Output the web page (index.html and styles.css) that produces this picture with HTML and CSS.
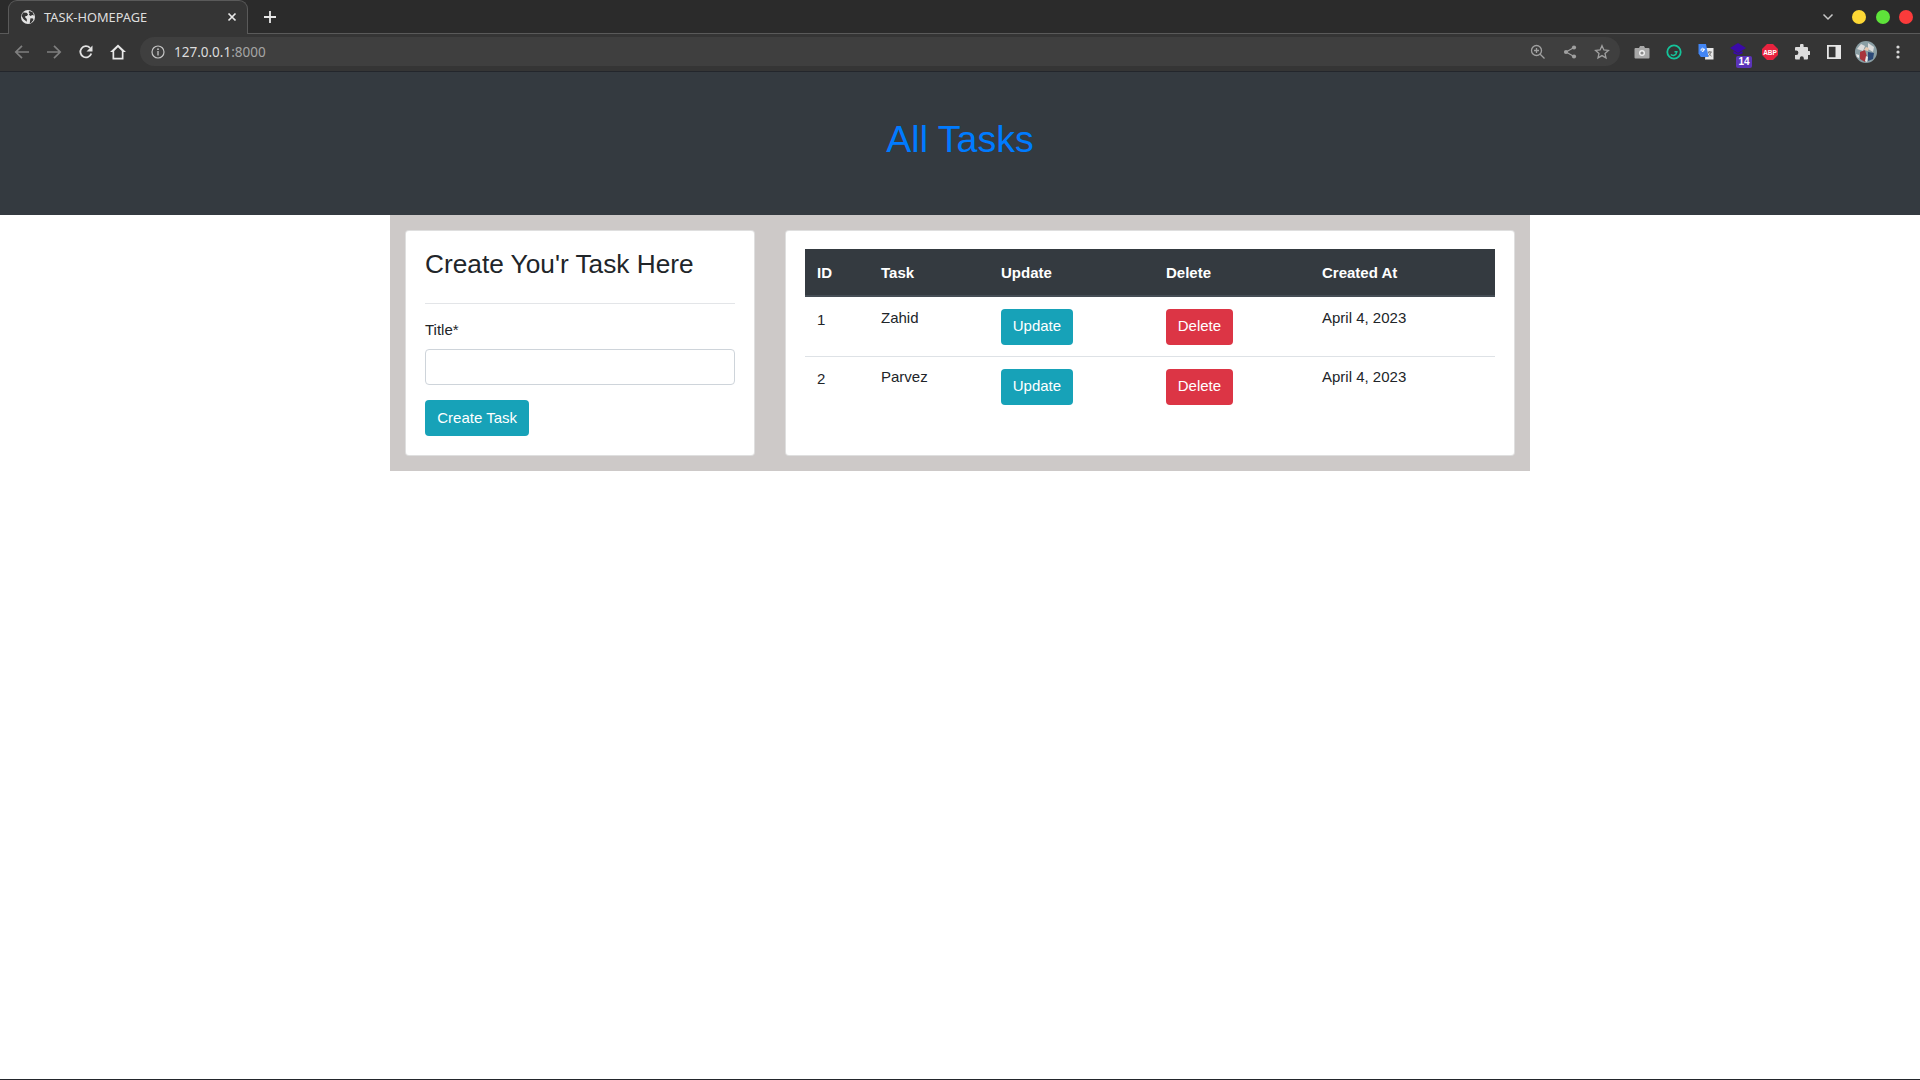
FILE: index.html
```html
<!DOCTYPE html>
<html lang="en">
<head>
<meta charset="utf-8">
<title>TASK-HOMEPAGE</title>
<link rel="stylesheet" href="styles.css">
</head>
<body>
<div class="browser">
  <div class="tabstrip">
    <div class="tab">
      <svg class="globe" width="16" height="16" viewBox="0 0 16 16"><circle cx="8" cy="8" r="7" fill="#e3e3e3"/><path d="M3 3.500l3.600.3 1.400 1.500-1 1.600-1.600.2-.2 1.400 1.600 1.600v2.600L3.400 10 1.600 7zM9.500 2l3.200 1.300L14 6.500l-1.800-.5-1.600.9-1.700-1.100.8-1.400-1.200-1.400zM10.500 9.200l2.600.4.300 1.500-2.400 2.800-1.200.2.300-2.800z" fill="#353535"/></svg>
      <span class="tab-title">TASK-HOMEPAGE</span>
      <svg class="tab-close" width="10" height="10" viewBox="0 0 10 10"><path d="M1.500 1.500l7 7M8.500 1.500l-7 7" stroke="#e8e8e8" stroke-width="1.700"/></svg>
    </div>
    <svg class="plus" width="14" height="14" viewBox="0 0 14 14"><path d="M7 1v12M1 7h12" stroke="#e8e8e8" stroke-width="1.800"/></svg>
    <div class="strip-right">
      <svg class="chevron" width="12" height="8" viewBox="0 0 12 8"><path d="M1.500 1.500L6 6l4.500-4.500" fill="none" stroke="#c8c8c8" stroke-width="1.500"/></svg>
      <span class="dot dot-yellow"></span>
      <span class="dot dot-green"></span>
      <span class="dot dot-red"></span>
    </div>
  </div>
  <div class="toolbar">
    <span class="tb"><svg width="16" height="16" viewBox="0 0 16 16"><path d="M15 8H2M8 1.800L1.800 8 8 14.200" fill="none" stroke="#7f7f7f" stroke-width="1.700"/></svg></span>
    <span class="tb"><svg width="16" height="16" viewBox="0 0 16 16"><path d="M1 8h13M8 1.800L14.200 8 8 14.200" fill="none" stroke="#7f7f7f" stroke-width="1.700"/></svg></span>
    <span class="tb"><svg width="16" height="16" viewBox="0 0 16 16"><path d="M13.300 9.500A5.600 5.600 0 1 1 12 3.900" fill="none" stroke="#e2e2e2" stroke-width="1.800"/><path d="M14.500 1.500v6h-6z" fill="#e2e2e2"/></svg></span>
    <span class="tb"><svg width="18" height="18" viewBox="0 0 18 18"><path d="M9 1.500L1 9h2.500v7.500h11V9H17zM5.200 14.800V8L9 4.300 12.800 8v6.800z" fill="#e8e8e8" fill-rule="evenodd"/></svg></span>
    <div class="omnibox">
      <svg class="info" width="14" height="14" viewBox="0 0 14 14"><circle cx="7" cy="7" r="6" fill="none" stroke="#c4c4c4" stroke-width="1.200"/><path d="M7 6v4.500" stroke="#c4c4c4" stroke-width="1.300"/><circle cx="7" cy="4.200" r=".9" fill="#c4c4c4"/></svg>
      <span class="url"><span class="url-host">127.0.0.1</span><span class="url-port">:8000</span></span>
      <div class="omni-actions">
        <span class="tb"><svg width="16" height="16" viewBox="0 0 16 16"><circle cx="6.500" cy="6.500" r="5" fill="none" stroke="#a0a0a0" stroke-width="1.300"/><path d="M10.200 10.200L14.500 14.500M6.500 4v5M4 6.500h5" stroke="#a0a0a0" stroke-width="1.300"/></svg></span>
        <span class="tb"><svg width="14" height="14" viewBox="0 0 14 14"><path d="M11 2.500L3 7l8 4.500" fill="none" stroke="#a0a0a0" stroke-width="1.200"/><circle cx="11" cy="2.500" r="2.100" fill="#a0a0a0"/><circle cx="3" cy="7" r="2.100" fill="#a0a0a0"/><circle cx="11" cy="11.500" r="2.100" fill="#a0a0a0"/></svg></span>
        <span class="tb"><svg width="16" height="16" viewBox="0 0 16 16"><path d="M8 1.700l1.900 4.200 4.500.5-3.400 3 1 4.500L8 11.600l-4 2.300 1-4.500-3.400-3 4.500-.5z" fill="none" stroke="#a0a0a0" stroke-width="1.300"/></svg></span>
      </div>
    </div>
    <span class="tb ext-first"><svg width="16" height="14" viewBox="0 0 16 14"><path d="M1.500 3H5l1-2h4l1 2h3.500a1 1 0 0 1 1 1v8.500a1 1 0 0 1-1 1h-13a1 1 0 0 1-1-1V4a1 1 0 0 1 1-1z" fill="#a8a8a8"/><circle cx="8" cy="8" r="3" fill="#f0f0f0"/><circle cx="8" cy="8" r="1.600" fill="#8a8a8a"/></svg></span>
    <span class="tb"><svg width="16" height="16" viewBox="0 0 16 16"><circle cx="8" cy="8" r="6.700" fill="none" stroke="#15c39a" stroke-width="1.800"/><path d="M4.800 10.500c1.800 1.600 5.300 1.300 6-2.700H8.500" fill="none" stroke="#15c39a" stroke-width="1.500"/></svg></span>
    <span class="tb"><svg width="16" height="16" viewBox="0 0 16 16"><path d="M8 4h7.500v11.500H7z" fill="#e8e8e8"/><path d="M9.800 8h4M11.800 7v1M10.500 8c.5 2 1.700 3.500 3 4.200M13 8c-.4 2-1.500 3.500-3 4.200" fill="none" stroke="#666" stroke-width=".8"/><path d="M.500 0H8l2.500 13H2.800L.500 9.500z" fill="#4285f4"/><path d="M7 5.300H4.900v1H6a1.500 1.500 0 1 1-.4-1.500" fill="none" stroke="#fff" stroke-width="1"/></svg></span>
    <span class="tb ext-cap">
      <svg width="16" height="12" viewBox="0 0 16 12"><path d="M8 0l8 5-8 5-8-5z" fill="#3b0aa8"/><path d="M3.500 8v2.500L8 12l4.500-1.500V8L8 10.500z" fill="#3b0aa8"/></svg>
      <span class="badge">14</span>
    </span>
    <span class="tb"><svg width="16" height="16" viewBox="0 0 16 16"><path d="M5 0h6l5 5v6l-5 5H5l-5-5V5z" fill="#e8233f"/><text class="abp" x="8" y="10.500" text-anchor="middle">ABP</text></svg></span>
    <span class="tb"><svg width="16" height="16" viewBox="0 0 16 16"><path d="M6 1.500a1.800 1.800 0 0 1 3.600 0V3H13a1 1 0 0 1 1 1v3h1a2 2 0 0 1 0 4h-1v3.500a1 1 0 0 1-1 1H9.800v-1.200a2 2 0 0 0-4 0v1.200H2a1 1 0 0 1-1-1V11h1.200a2.200 2.200 0 0 0 0-4.400H1V4a1 1 0 0 1 1-1h4z" fill="#dcdcdc"/></svg></span>
    <span class="tb"><svg width="14" height="14" viewBox="0 0 14 14"><path d="M0 0h14v14H0zM1.800 1.800v10.400h6.700V1.800z" fill="#e6e6e6" fill-rule="evenodd"/></svg></span>
    <span class="tb"><svg width="22" height="22" viewBox="0 0 22 22"><circle cx="11" cy="11" r="11" fill="#8a9ea4"/><path d="M2 8l4-5 4 2-2 5zM13 2l6 4-1 5-5-3z" fill="#dcdcdc"/><path d="M5 11l5-2 2 7-2 5-5-3z" fill="#a8343c"/><path d="M13 11l6 1-1 6-5 2z" fill="#2c4a78"/><path d="M9 9l2-3 3 1-1 3z" fill="#e8c8b0"/><path d="M1 13l3 1v3l-2-1zM11 15l2 1-1 5-2-1z" fill="#e8e8e8"/></svg></span>
    <span class="tb"><svg width="4" height="14" viewBox="0 0 4 14"><circle cx="2" cy="2" r="1.600" fill="#d8d8d8"/><circle cx="2" cy="7" r="1.600" fill="#d8d8d8"/><circle cx="2" cy="12" r="1.600" fill="#d8d8d8"/></svg></span>
  </div>
</div>
<main class="page">
  <header class="hero"><h1 class="hero-title">All Tasks</h1></header>
  <section class="board">
    <div class="card card-form">
      <h3 class="form-title">Create You'r Task Here</h3>
      <hr class="rule">
      <label class="field-label" for="title">Title*</label>
      <input class="field-input" id="title" type="text">
      <button class="btn btn-info" type="button">Create Task</button>
    </div>
    <div class="card card-table">
      <table class="tasks">
        <thead>
          <tr>
            <th class="c-id">ID</th>
            <th class="c-task">Task</th>
            <th class="c-update">Update</th>
            <th class="c-delete">Delete</th>
            <th class="c-date">Created At</th>
          </tr>
        </thead>
        <tbody>
          <tr>
            <td class="id-cell">1</td>
            <td>Zahid</td>
            <td class="btn-cell"><button class="btn btn-info" type="button">Update</button></td>
            <td class="btn-cell"><button class="btn btn-danger" type="button">Delete</button></td>
            <td>April 4, 2023</td>
          </tr>
          <tr>
            <td class="id-cell">2</td>
            <td>Parvez</td>
            <td class="btn-cell"><button class="btn btn-info" type="button">Update</button></td>
            <td class="btn-cell"><button class="btn btn-danger" type="button">Delete</button></td>
            <td>April 4, 2023</td>
          </tr>
        </tbody>
      </table>
    </div>
  </section>
</main>
</body>
</html>
```

FILE: styles.css
```css
* { box-sizing: border-box; }
html, body { margin: 0; height: 100%; }
body {
  height: 1080px;
  overflow: hidden;
  display: flex;
  flex-direction: column;
  font-family: "Liberation Sans", Arial, sans-serif;
  color: #212529;
  background: #fff;
}

/* browser chrome */
.browser { flex: none; }
.tabstrip {
  height: 34px;
  background: #2b2b2b;
  display: flex;
  align-items: flex-end;
  padding-left: 8px;
  position: relative;
  border-bottom: 1px solid #5a5a5a;
}
.tab {
  width: 240px;
  height: 34px;
  margin-bottom: -1px;
  background: #353535;
  border: 1px solid #5a5a5a;
  border-bottom: none;
  border-radius: 9px 9px 0 0;
  display: flex;
  align-items: center;
  padding: 0 10px 2px 11px;
}
.globe { flex: none; }
.tab-title {
  margin-left: 8px;
  flex: 1;
  font: 12.800px "Noto Sans", sans-serif;
  color: #dedede;
  white-space: nowrap;
}
.plus { align-self: center; margin-left: 15px; }
.strip-right {
  margin-left: auto;
  align-self: center;
  display: flex;
  align-items: center;
  padding-right: 7px;
}
.chevron { margin-right: 18px; }
.dot { width: 14px; height: 14px; border-radius: 50%; margin-left: 9.500px; }
.dot:first-of-type { margin-left: 0; }
.dot-yellow { background: #fdd835; }
.dot-green { background: #5ee33a; }
.dot-red { background: #fb3b3b; }

.toolbar {
  height: 38px;
  background: #353535;
  border-bottom: 1px solid #23262c;
  display: flex;
  align-items: center;
  padding: 0 6px 2px;
}
.tb {
  flex: none;
  width: 32px;
  height: 32px;
  display: flex;
  align-items: center;
  justify-content: center;
  position: relative;
}
.omnibox {
  flex: 1;
  height: 29px;
  margin: 0 0 0 6px;
  border-radius: 15px;
  background: #3f3f3f;
  display: flex;
  align-items: center;
  padding-left: 11px;
  padding-right: 2px;
}
.info { flex: none; }
.url { margin-left: 9px; font: 13.500px "Noto Sans", sans-serif; white-space: nowrap; }
.url-host { color: #dcdcdc; }
.url-port { color: #a5a5a5; }
.omni-actions { margin-left: auto; display: flex; }
.ext-first { margin-left: 6px; }
.ext-cap svg { margin-top: -5px; }
.badge {
  position: absolute;
  left: 14px;
  bottom: 0;
  min-width: 16px;
  height: 12px;
  border-radius: 2px;
  background: #5b34b8;
  color: #fff;
  font: bold 10px/12px "Liberation Sans", sans-serif;
  text-align: center;
}
.abp { font: bold 6.500px "Liberation Sans", sans-serif; fill: #fff; }

/* page */
.page { flex: 1; border-bottom: 1px solid #23262c; }
.hero {
  height: 143px;
  background: #343a40;
  padding-top: 43px;
}
.hero-title {
  margin: 0;
  text-align: center;
  font-size: 37.500px;
  font-weight: 400;
  line-height: 48px;
  color: #007bff;
}
.board {
  width: 1140px;
  margin: 0 auto;
  padding: 15px;
  background: #cdc9c8;
  display: flex;
  gap: 30px;
}
.card {
  background: #fff;
  border: 1px solid rgba(0, 0, 0, .125);
  border-radius: 4px;
  height: 226px;
}
.card-form { flex: none; width: 350px; padding: 18px 19px 19px; display: flex; flex-direction: column; align-items: flex-start; }
.card-table { flex: none; width: 730px; padding: 18px 19px; }
.form-title {
  margin: 0;
  font-size: 26.250px;
  font-weight: 400;
  line-height: 31px;
}
.rule { width: 100%; margin: 23px 0 0; border: 0; border-top: 1px solid #e3e5e8; }
.field-label { margin-top: 17px; font-size: 15px; line-height: 18px; }
.field-input {
  width: 100%;
  height: 36px;
  margin-top: 10px;
  border: 1px solid #ced4da;
  border-radius: 4px;
  background: #fff;
}
.btn {
  display: inline-block;
  height: 35.750px;
  padding: 0 11.250px;
  border: 1px solid transparent;
  border-radius: 4px;
  font: 15px/22px "Liberation Sans", Arial, sans-serif;
  color: #fff;
  white-space: nowrap;
}
.tasks .btn { display: block; padding: 0 10.750px 2px; }
.card-form .btn { margin-top: 15px; }
.btn-info { background: #17a2b8; }
.btn-danger { background: #dc3545; }

.tasks {
  width: 690px;
  table-layout: fixed;
  border-collapse: collapse;
  font-size: 15px;
}
.tasks th {
  height: 47px;
  background: #343a40;
  border-bottom: 2px solid #454d55;
  color: #fff;
  font-weight: 700;
  text-align: left;
  padding: 0 12px;
}
.c-id { width: 64px; }
.c-task { width: 120px; }
.c-update { width: 165px; }
.c-delete { width: 156px; }
.tasks td {
  vertical-align: top;
  padding: 12px;
  line-height: 18px;
  border-top: 1px solid #dee2e6;
}
.tasks td.btn-cell { padding: 12px 12px 11px; }
.tasks tbody tr:first-child td { border-top: 0; }
.tasks td.id-cell { padding-top: 14px; }
.tasks tbody tr + tr td { padding-top: 11px; }
.tasks tbody tr + tr td.id-cell { padding-top: 13px; }
```
